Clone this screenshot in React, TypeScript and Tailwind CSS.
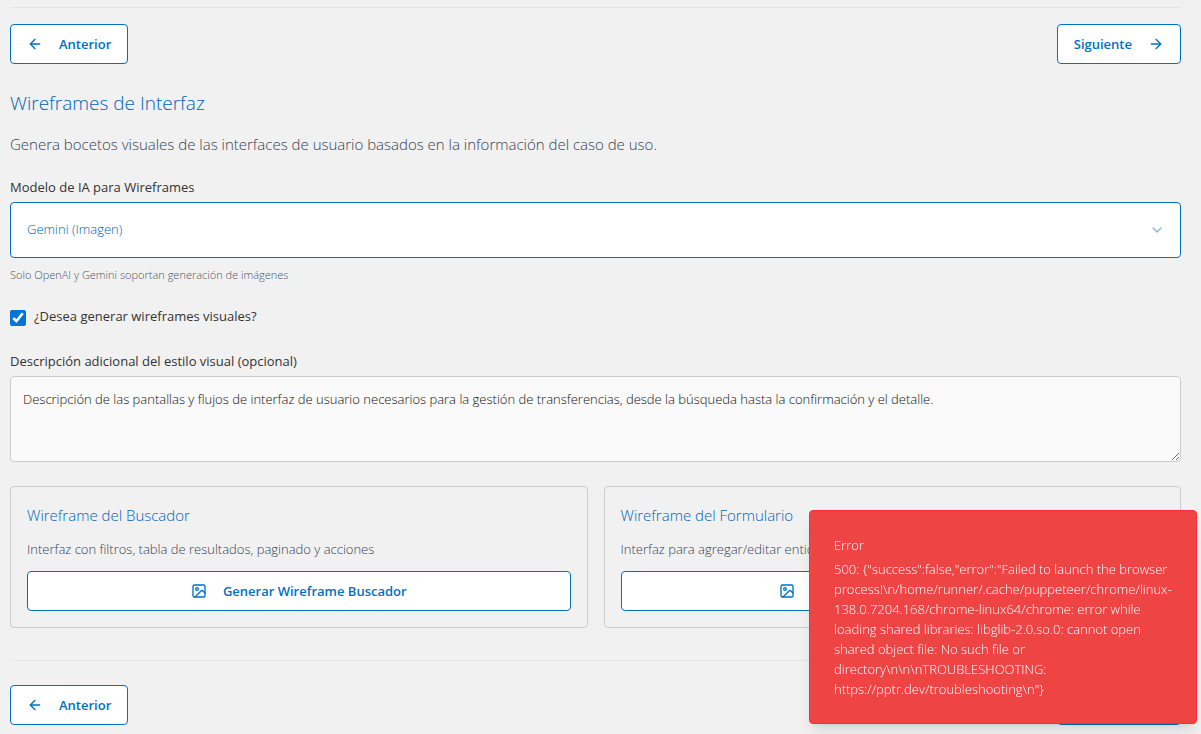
import { ArrowLeft, ArrowRight, ChevronDown, Image as ImageIcon } from "lucide-react";
import type { ReactNode } from "react";

const errorLines = [
  '500: {"success":false,"error":"Failed to launch the browser',
  "process!\\n/home/runner/.cache/puppeteer/chrome/linux-",
  "138.0.7204.168/chrome-linux64/chrome: error while",
  "loading shared libraries: libglib-2.0.so.0: cannot open",
  "shared object file: No such file or",
  "directory\\n\\n\\nTROUBLESHOOTING:",
  'https://pptr.dev/troubleshooting\\n"}',
];

function OutlineButton({ children, full = false }: { children: ReactNode; full?: boolean }) {
  return (
    <button
      type="button"
      className={`${full ? "w-full" : ""} flex h-10 items-center justify-center gap-4 rounded border border-[#0070c4] bg-white px-4 text-[13px] leading-5 font-semibold whitespace-nowrap text-[#0070c4]`}
    >
      {children}
    </button>
  );
}

function StepNav() {
  return (
    <nav aria-label="Pasos" className="flex items-center justify-between">
      <OutlineButton>
        <ArrowLeft size={16} />
        Anterior
      </OutlineButton>
      <OutlineButton>
        Siguiente
        <ArrowRight size={16} />
      </OutlineButton>
    </nav>
  );
}

function WireframeCard({ title, description, action }: { title: string; description: string; action: string }) {
  return (
    <section className="rounded border border-[#cccccc] p-4">
      <h3 className="text-[15px] leading-6 font-light text-[#0064b8]">{title}</h3>
      <p className="mt-3 mb-3 text-[13px] leading-5 font-light text-gray-700">{description}</p>
      <OutlineButton full>
        <ImageIcon size={16} />
        {action}
      </OutlineButton>
    </section>
  );
}

export default function App() {
  return (
    <div className="min-h-screen bg-[#f1f1f1] pt-[7px] pr-5 pb-2 pl-[10px] font-['Open_Sans',sans-serif] text-[#333333]">
      <main className="border-t border-[#e5e5e5] pt-4">
        <StepNav />

        <h2 className="mt-6 text-[19px] leading-[30px] font-light text-[#0064b8]">Wireframes de Interfaz</h2>
        <p className="mt-[14px] text-[15px] leading-6 font-light text-gray-700">
          Genera bocetos visuales de las interfaces de usuario basados en la información del caso de uso.
        </p>

        <label htmlFor="model" className="mt-5 block text-[13px] leading-[22px]">
          Modelo de IA para Wireframes
        </label>
        <div className="relative mt-1">
          <select
            id="model"
            className="block h-14 w-full appearance-none rounded border border-[#0070c4] bg-white px-4 text-[13px] font-light text-[#0064b8]"
          >
            <option>Gemini (Imagen)</option>
            <option>OpenAI</option>
          </select>
          <ChevronDown
            size={16}
            className="pointer-events-none absolute top-5 right-4 text-[#0070c4] opacity-50"
          />
        </div>
        <p className="mt-2 text-[11px] leading-[18px] font-light text-gray-600">
          Solo OpenAI y Gemini soportan generación de imágenes
        </p>

        <div className="mt-6 flex h-5 items-start gap-2">
          <input id="visual" type="checkbox" defaultChecked className="mt-0.5 size-4 accent-[#0075d7]" />
          <label htmlFor="visual" className="text-[13px] leading-4">
            ¿Desea generar wireframes visuales?
          </label>
        </div>

        <label htmlFor="style" className="mt-[22px] block text-[13px] leading-[22px]">
          Descripción adicional del estilo visual (opcional)
        </label>
        <textarea
          id="style"
          className="mt-1 block h-[86px] w-full rounded border border-[#cccccc] bg-[#fafafa] p-3 text-[13px] leading-5 font-light text-[#111111]"
          defaultValue="Descripción de las pantallas y flujos de interfaz de usuario necesarios para la gestión de transferencias, desde la búsqueda hasta la confirmación y el detalle."
        />

        <div className="mt-6 grid grid-cols-2 gap-4">
          <WireframeCard
            title="Wireframe del Buscador"
            description="Interfaz con filtros, tabla de resultados, paginado y acciones"
            action="Generar Wireframe Buscador"
          />
          <WireframeCard
            title="Wireframe del Formulario"
            description="Interfaz para agregar/editar entidades"
            action="Generar Wireframe Formulario"
          />
        </div>
      </main>

      <footer className="mt-8 border-t border-gray-200 pt-6">
        <StepNav />
      </footer>

      <div
        role="alert"
        className="fixed right-1 bottom-[10px] w-[388px] rounded border border-red-500 bg-[#ef4444] p-6 text-[13px] leading-5 font-light text-white shadow-lg"
      >
        <div>Error</div>
        <p className="mt-1 whitespace-pre">{errorLines.join("\n")}</p>
      </div>
    </div>
  );
}
